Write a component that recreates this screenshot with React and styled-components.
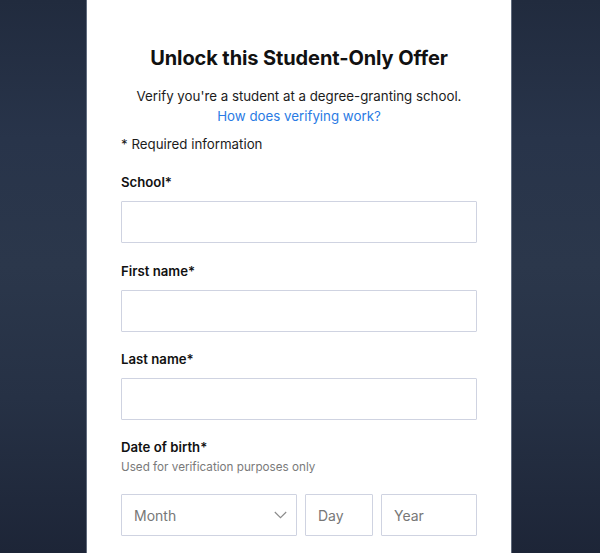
import React from "react";
import styled, { createGlobalStyle } from "styled-components";

const Global = createGlobalStyle`
  html, body { margin: 0; padding: 0; height: 100%; }
  body {
    font-family: Inter, "Noto Sans", "Liberation Sans", sans-serif;
    background: #27324a;
  }
  #root { height: 100%; }
`;

const Page = styled.div`
  width: 600px;
  height: 553px;
  overflow: hidden;
  display: flex;
  justify-content: center;
  background: linear-gradient(
    180deg,
    #212b3e 0%,
    #28344a 25%,
    #2b374b 48%,
    #263145 72%,
    #1d2537 100%
  );
`;

const Card = styled.div`
  width: 424px;
  margin-left: -2px;
  background: #ffffff;
  box-shadow: 0 0 0 1px rgba(150, 160, 176, 0.55);
  padding: 46px 34px 0 34px;
  box-sizing: border-box;
  display: flex;
  flex-direction: column;
`;

const Title = styled.h1`
  margin: 0;
  font-size: 20px;
  line-height: 24px;
  font-weight: 700;
  color: #111;
  text-align: center;
  letter-spacing: -0.1px;
`;

const Intro = styled.p`
  margin: 16px 0 0;
  font-size: 13.3px;
  line-height: 20px;
  color: #1c1c1c;
  text-align: center;
`;

const Link = styled.a`
  color: #2a7be4;
  text-decoration: none;
`;

const Note = styled.div`
  margin-top: 8px;
  font-size: 13.3px;
  line-height: 20px;
  color: #1c1c1c;
`;

const Field = styled.div`
  margin-top: ${(p) => p.$top}px;
  display: flex;
  flex-direction: column;
`;

const Label = styled.label`
  font-size: 13.2px;
  line-height: 20px;
  font-weight: 600;
  color: #111;
`;

const Helper = styled.div`
  margin-top: 2px;
  font-size: 11.7px;
  line-height: 16px;
  color: #7a7a7a;
`;

const Input = styled.input`
  margin-top: ${(p) => (p.$top != null ? p.$top : 9)}px;
  height: 42px;
  box-sizing: border-box;
  border: 1px solid #cfd3e1;
  border-radius: 1px;
  padding: 0 12px;
  font-family: inherit;
  font-size: 14px;
  color: #222;
  outline: none;
  background: #fff;
  &::placeholder { color: #777; }
`;

const DateRow = styled.div`
  margin-top: 19px;
  display: grid;
  grid-template-columns: 176px 68px 1fr;
  gap: 8px;
`;

const Select = styled.div`
  position: relative;
  height: 42px;
  box-sizing: border-box;
  border: 1px solid #cfd3e1;
  border-radius: 1px;
  padding: 0 9px 0 12px;
  display: flex;
  align-items: center;
  justify-content: space-between;
  font-size: 14px;
  color: #777;
`;

const Chevron = () => (
  <svg width="13" height="8" viewBox="0 0 13 8" fill="none">
    <path d="M0.8 1l5.7 5.7L12.2 1" stroke="#8a8a8a" strokeWidth="1.1" />
  </svg>
);

const DateInput = styled(Input)`
  margin-top: 0;
  width: 100%;
  min-width: 0;
`;

export default function App() {
  return (
    <Page>
      <Global />
      <Card>
        <Title>Unlock this Student-Only Offer</Title>
        <Intro>
          Verify you're a student at a degree-granting school.
          <br />
          <Link href="#">How does verifying work?</Link>
        </Intro>
        <Note>* Required information</Note>
        <Field $top={18}>
          <Label>School*</Label>
          <Input />
        </Field>
        <Field $top={18}>
          <Label>First name*</Label>
          <Input />
        </Field>
        <Field $top={17}>
          <Label>Last name*</Label>
          <Input />
        </Field>
        <Field $top={17}>
          <Label>Date of birth*</Label>
          <Helper>Used for verification purposes only</Helper>
        </Field>
        <DateRow>
          <Select>
            <span>Month</span>
            <Chevron />
          </Select>
          <DateInput placeholder="Day" />
          <DateInput placeholder="Year" />
        </DateRow>
      </Card>
    </Page>
  );
}
